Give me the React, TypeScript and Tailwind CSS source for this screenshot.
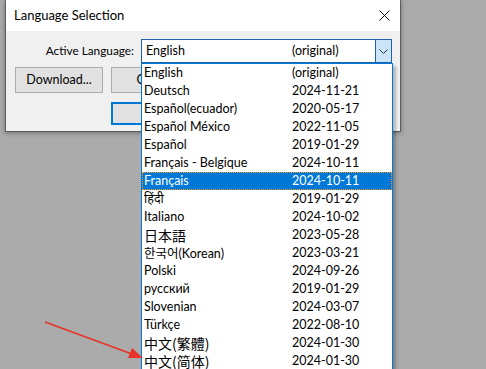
import * as React from "react";

const languages: { name: React.ReactNode; date: string }[] = [
  { name: "English", date: "(original)" },
  { name: "Deutsch", date: "2024-11-21" },
  { name: "Español(ecuador)", date: "2020-05-17" },
  { name: "Español México", date: "2022-11-05" },
  { name: "Español", date: "2019-01-29" },
  { name: "Français - Belgique", date: "2024-10-11" },
  { name: "Français", date: "2024-10-11" },
  { name: <span className="font-['Noto_Sans','Noto_Sans_Devanagari',sans-serif]">हिंदी</span>, date: "2019-01-29" },
  { name: "Italiano", date: "2024-10-02" },
  { name: <span className="text-[14px] font-['Noto_Sans_CJK_JP',sans-serif]">日本語</span>, date: "2023-05-28" },
  {
    name: (
      <>
        <span className="font-['Noto_Sans_CJK_KR',sans-serif] text-[12.5px]">한국어</span>(Korean)
      </>
    ),
    date: "2023-03-21",
  },
  { name: "Polski", date: "2024-09-26" },
  { name: "русский", date: "2019-01-29" },
  { name: "Slovenian", date: "2024-03-07" },
  { name: "Türkçe", date: "2022-08-10" },
  { name: <span className="text-[14px] font-['Noto_Sans_CJK_TC',sans-serif]">中文(繁體)</span>, date: "2024-01-30" },
  { name: <span className="text-[14px] font-['Noto_Sans_CJK_SC',sans-serif]">中文(简体)</span>, date: "2024-01-30" },
];

const SELECTED = 6;

export default function App() {
  return (
    <div className="relative h-[369px] w-[486px] overflow-hidden bg-[#ababab] font-['Lato','Noto_Sans',sans-serif] text-[12.5px] text-black">
      {/* dialog */}
      <div className="ml-[5px] w-[396px] border border-t-0 border-[#5d5d5d] shadow-[0_1px_5px_rgba(0,0,0,0.35)]">
        <div className="flex h-[31px] items-center justify-between bg-white pl-[8px] pr-[10px]">
          <span className="text-[13px]">Language Selection</span>
          <svg width="11" height="11" viewBox="0 0 11 11">
            <path d="M0.5 0.5 L10.5 10.5 M10.5 0.5 L0.5 10.5" stroke="#111" strokeWidth="1" />
          </svg>
        </div>
        <div className="h-[100px] bg-[#f0f0f0] pt-[8px]">
          <div className="flex items-center">
            <span className="w-[129px] pr-[1px] text-right text-[11.8px]">Active Language:</span>
            <div className="ml-[6px] flex h-[24px] w-[251px] border border-[#1f62a8] bg-white">
              <div className="flex flex-1 items-center pl-[4px]">
                <span className="w-[146px]">English</span>
                <span>(original)</span>
              </div>
              <div className="flex w-[16px] items-center justify-center border-l border-[#1f62a8] bg-[#cce4f7]">
                <svg width="9" height="5" viewBox="0 0 9 5">
                  <path d="M0.5 0.5 L4.5 4.5 L8.5 0.5" stroke="#333" strokeWidth="1" fill="none" />
                </svg>
              </div>
            </div>
          </div>
          <div className="mt-[4px] flex gap-[8px] pl-[9px]">
            <button className="h-[26px] w-[88px] border border-[#adadad] bg-[#e1e1e1]">Download...</button>
            <button className="h-[26px] w-[88px] border border-[#adadad] bg-[#e1e1e1]">Cancel</button>
          </div>
          <div className="mt-[9px] pl-[105px]">
            <button className="h-[23px] w-[88px] border-2 border-[#0078d7] bg-[#e1e1e1]">OK</button>
          </div>
        </div>
      </div>

      {/* dropdown list */}
      <div className="absolute left-[141px] top-[63px] w-[252px] border border-[#0078d7] bg-white shadow-[3px_3px_3px_rgba(0,0,0,0.25)]">
        {languages.map((l, i) => (
          <div
            key={i}
            className={
              i === SELECTED
                ? "flex h-[18px] items-center bg-[#0078d7] pl-[2px] pt-[1px] text-white outline-1 -outline-offset-1 outline-dotted outline-[#f59a23]"
                : "flex h-[18px] items-center pl-[2px] pt-[1px]"
            }
          >
            <span className="w-[148px] whitespace-nowrap leading-none">{l.name}</span>
            <span className="leading-none">{l.date}</span>
          </div>
        ))}
      </div>

      {/* red arrow */}
      <svg className="absolute left-0 top-0" width="486" height="369" viewBox="0 0 486 369">
        <line x1="45" y1="322" x2="132" y2="354" stroke="#e8332a" strokeWidth="1.6" />
        <path d="M143 358 L128 358 L132 348 Z" fill="#e8332a" />
      </svg>
    </div>
  );
}
